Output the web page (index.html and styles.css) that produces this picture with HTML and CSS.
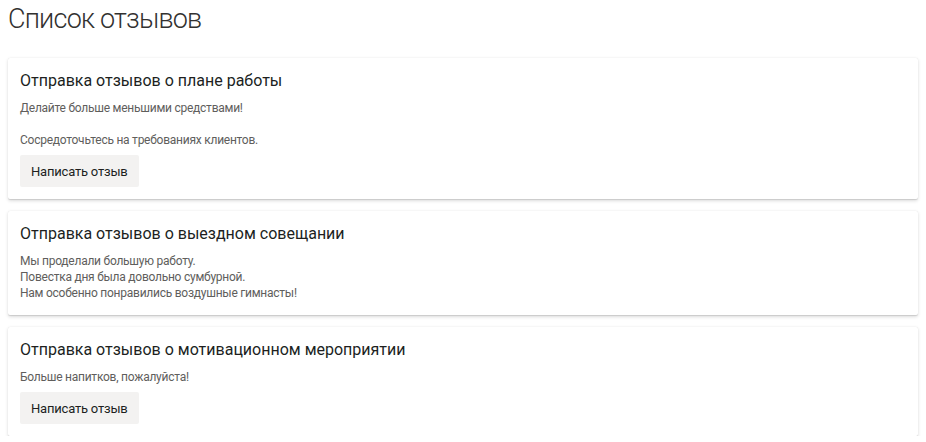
FILE: index.html
```html
<!DOCTYPE html>
<html lang="ru">
<head>
<meta charset="utf-8">
<title>Список отзывов</title>
<link rel="stylesheet" href="styles.css">
</head>
<body>
<main class="page">
  <h1 class="page-title">Список отзывов</h1>
  <div class="list">
    <section class="card">
      <h2 class="card-title">Отправка отзывов о плане работы</h2>
      <p class="card-text">Делайте больше меньшими средствами!

Сосредоточьтесь на требованиях клиентов.</p>
      <button class="btn" type="button">Написать отзыв</button>
    </section>
    <section class="card">
      <h2 class="card-title">Отправка отзывов о выездном совещании</h2>
      <p class="card-text">Мы проделали большую работу.
Повестка дня была довольно сумбурной.
Нам особенно понравились воздушные гимнасты!</p>
    </section>
    <section class="card">
      <h2 class="card-title">Отправка отзывов о мотивационном мероприятии</h2>
      <p class="card-text">Больше напитков, пожалуйста!</p>
      <button class="btn" type="button">Написать отзыв</button>
    </section>
  </div>
</main>
</body>
</html>
```
FILE: styles.css
```css
html, body {
  margin: 0;
  padding: 0;
  background: #ffffff;
}
body {
  font-family: Roboto, "Open Sans", sans-serif;
  color: #323130;
}
.page {
  padding: 0 8px;
}
.page-title {
  margin: 0 0 20px 0;
  font-size: 27px;
  line-height: 38px;
  font-weight: 300;
  letter-spacing: -0.8px;
  color: #323130;
}
.list {
  display: flex;
  flex-direction: column;
  gap: 12px;
}
.card {
  background: #ffffff;
  border-radius: 2px;
  box-shadow: 0 1.6px 3.6px 0 rgba(0,0,0,0.132), 0 0.3px 0.9px 0 rgba(0,0,0,0.108);
  padding: 12px;
  display: flex;
  flex-direction: column;
  align-items: flex-start;
}
.card-title {
  margin: 0 0 8px 0;
  font-size: 16px;
  line-height: 22px;
  font-weight: 400;
  color: #201f1e;
}
.card-text {
  margin: 0 0 2px 0;
  font-size: 12px;
  line-height: 16px;
  letter-spacing: -0.25px;
  color: #605e5c;
  white-space: pre-line;
}
.btn {
  margin-top: 5px;
  font-family: inherit;
  font-size: 13px;
  letter-spacing: -0.2px;
  color: #201f1e;
  background: #f3f2f1;
  border: none;
  border-radius: 2px;
  height: 32px;
  padding: 0 11px;
  cursor: pointer;
}
```
